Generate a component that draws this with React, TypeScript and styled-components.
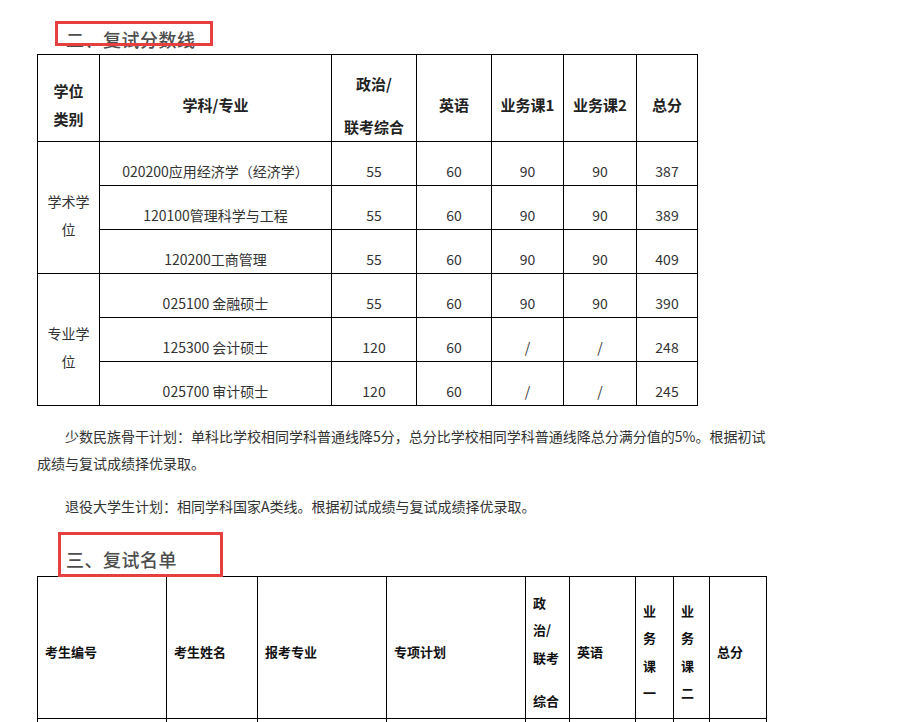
import React from "react";
import styled, { createGlobalStyle } from "styled-components";

const GlobalStyle = createGlobalStyle`
  html, body {
    margin: 0;
    padding: 0;
    background: #fff;
  }
  body {
    font-family: "Noto Sans CJK SC", "Liberation Sans", sans-serif;
    color: #333;
  }
`;

interface IScoreRow {
    major: string;
    pol: string;
    eng: string;
    c1: string;
    c2: string;
    total: string;
}

const academic: IScoreRow[] = [
    { major: "020200应用经济学（经济学）", pol: "55", eng: "60", c1: "90", c2: "90", total: "387" },
    { major: "120100管理科学与工程", pol: "55", eng: "60", c1: "90", c2: "90", total: "389" },
    { major: "120200工商管理", pol: "55", eng: "60", c1: "90", c2: "90", total: "409" },
];

const professional: IScoreRow[] = [
    { major: "025100 金融硕士", pol: "55", eng: "60", c1: "90", c2: "90", total: "390" },
    { major: "125300 会计硕士", pol: "120", eng: "60", c1: "/", c2: "/", total: "248" },
    { major: "025700 审计硕士", pol: "120", eng: "60", c1: "/", c2: "/", total: "245" },
];

const scoreCols = [62, 232, 85, 75, 72, 73, 61];
const listCols = [129, 91, 129, 139, 44, 66, 38, 36, 57];

const App = () => {
    const renderGroup = (label: string, rows: IScoreRow[]) =>
        rows.map((r, i) => (
            <tr key={r.major}>
                {i === 0 && <GroupCell rowSpan={rows.length}>{label}</GroupCell>}
                <DataCell>{r.major}</DataCell>
                <DataCell>{r.pol}</DataCell>
                <DataCell>{r.eng}</DataCell>
                <DataCell>{r.c1}</DataCell>
                <DataCell>{r.c2}</DataCell>
                <DataCell>{r.total}</DataCell>
            </tr>
        ));

    return (
        <Page>
            <GlobalStyle />
            <TitleBlock $padTop={27} $padBottom={3}>
                <TitleText>二、复试分数线</TitleText>
                <Mark style={{ left: 18, top: 21, width: 158, height: 25 }} />
            </TitleBlock>

            <Table style={{ width: 661 }}>
                <colgroup>
                    {scoreCols.map((w, i) => <col key={i} style={{ width: w }} />)}
                </colgroup>
                <tbody>
                    <tr>
                        <HeadCell>学位<br />类别</HeadCell>
                        <HeadCell>学科/专业</HeadCell>
                        <HeadCell>
                            <HeadLine>政治/</HeadLine>
                            <HeadLine $gap={15}>联考综合</HeadLine>
                        </HeadCell>
                        <HeadCell>英语</HeadCell>
                        <HeadCell>业务课1</HeadCell>
                        <HeadCell>业务课2</HeadCell>
                        <HeadCell>总分</HeadCell>
                    </tr>
                    {renderGroup("学术学位", academic)}
                    {renderGroup("专业学位", professional)}
                </tbody>
            </Table>

            <Para $top={17}>少数民族骨干计划：单科比学校相同学科普通线降5分，总分比学校相同学科普通线降总分满分值的5%。根据初试成绩与复试成绩择优录取。</Para>
            <Para $top={16}>退役大学生计划：相同学科国家A类线。根据初试成绩与复试成绩择优录取。</Para>

            <TitleBlock $padTop={27} $padBottom={5}>
                <TitleText>三、复试名单</TitleText>
                <Mark style={{ left: 21, top: 12, width: 165, height: 45 }} />
            </TitleBlock>

            <Table style={{ width: 730 }}>
                <colgroup>
                    {listCols.map((w, i) => <col key={i} style={{ width: w }} />)}
                </colgroup>
                <tbody>
                    <tr>
                        <ListHead>考生编号</ListHead>
                        <ListHead>考生姓名</ListHead>
                        <ListHead>报考专业</ListHead>
                        <ListHead>专项计划</ListHead>
                        <ListHead>
                            <StackLine>政</StackLine>
                            <StackLine>治/</StackLine>
                            <StackLine>联考</StackLine>
                            <StackLine $gap={16}>综合</StackLine>
                        </ListHead>
                        <ListHead>英语</ListHead>
                        <ListHead>
                            <StackLine>业</StackLine>
                            <StackLine>务</StackLine>
                            <StackLine>课</StackLine>
                            <StackLine>一</StackLine>
                        </ListHead>
                        <ListHead>
                            <StackLine>业</StackLine>
                            <StackLine>务</StackLine>
                            <StackLine>课</StackLine>
                            <StackLine>二</StackLine>
                        </ListHead>
                        <ListHead>总分</ListHead>
                    </tr>
                    <tr>
                        {listCols.map((_, i) => <EmptyCell key={i} />)}
                    </tr>
                </tbody>
            </Table>
        </Page>
    );
};

const Page = styled.div`
    padding-left: 37px;
    width: 760px;
`;

const TitleBlock = styled.div<{ $padTop: number; $padBottom: number }>`
    position: relative;
    padding-top: ${props => props.$padTop}px;
    padding-bottom: ${props => props.$padBottom}px;
    padding-left: 29px;
`;

const TitleText = styled.div`
    font-size: 18px;
    line-height: 24px;
    color: #4d4d4d;
    font-weight: 500;
    letter-spacing: 0.5px;
`;

const Mark = styled.div`
    position: absolute;
    box-sizing: border-box;
    border: 3px solid #e5403f;
    z-index: 2;
`;

const Table = styled.table`
    border-collapse: collapse;
    table-layout: fixed;
`;

const HeadCell = styled.td`
    height: 87px;
    box-sizing: border-box;
    border: 1px solid #000;
    padding: 14px 2px 0;
    text-align: center;
    vertical-align: middle;
    font-size: 15px;
    font-weight: 700;
    line-height: 28px;
    color: #222;
`;

const HeadLine = styled.div<{ $gap?: number }>`
    margin-top: ${props => props.$gap ?? 0}px;
`;

const DataCell = styled.td`
    height: 44px;
    box-sizing: border-box;
    border: 1px solid #000;
    padding: 14px 2px 0;
    text-align: center;
    vertical-align: middle;
    font-size: 14px;
    line-height: 20px;
    color: #333;
    white-space: nowrap;
`;

const GroupCell = styled(DataCell)`
    padding: 14px 5px 0;
    line-height: 28px;
    white-space: normal;
`;

const Para = styled.p<{ $top: number }>`
    margin: ${props => props.$top}px 0 0;
    width: 738px;
    text-indent: 28px;
    font-size: 14px;
    line-height: 27px;
    color: #333;
`;

const ListHead = styled.td`
    height: 142px;
    box-sizing: border-box;
    border: 1px solid #000;
    padding: 8px 2px 0 7px;
    text-align: left;
    vertical-align: middle;
    font-size: 13px;
    font-weight: 700;
    line-height: 27.5px;
    color: #111;
`;

const StackLine = styled.div<{ $gap?: number }>`
    margin-top: ${props => props.$gap ?? 0}px;
    white-space: nowrap;
`;

const EmptyCell = styled.td`
    height: 40px;
    border: 1px solid #000;
`;

export default App;
